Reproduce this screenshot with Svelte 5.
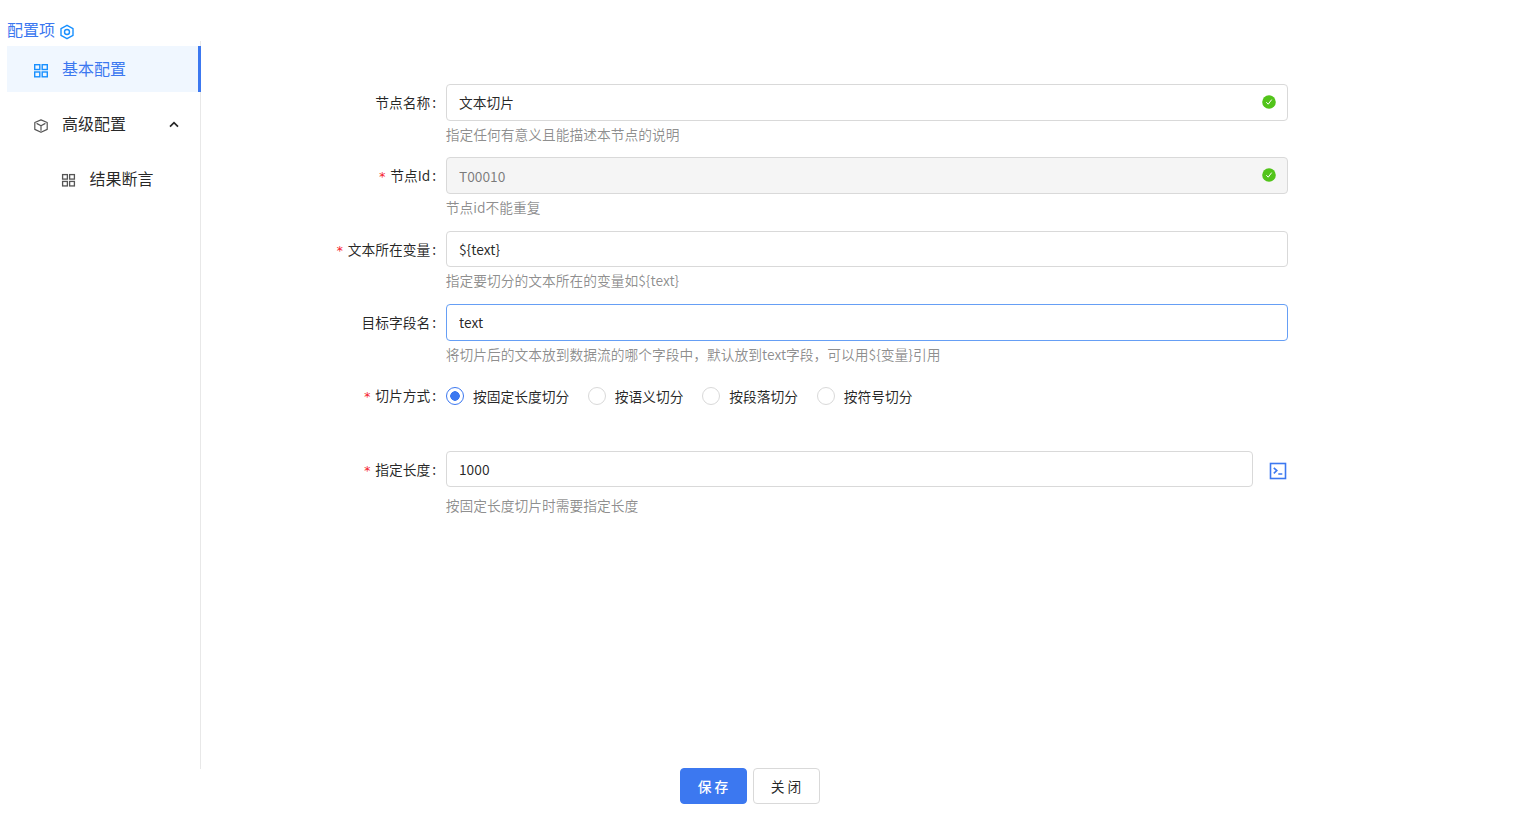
<script>
  let sliceType = $state("fixed");
  let openAdvanced = $state(true);

  const sliceTypes = [
    { value: "fixed", label: "按固定长度切分" },
    { value: "semantic", label: "按语义切分" },
    { value: "paragraph", label: "按段落切分" },
    { value: "symbol", label: "按符号切分" },
  ];

  let fields = $state([
    { id: "name", label: "节点名称", value: "文本切片", help: "指定任何有意义且能描述本节点的说明", valid: true },
    { id: "nodeId", label: "节点Id", value: "T00010", help: "节点id不能重复", required: true, disabled: true, valid: true },
    { id: "source", label: "文本所在变量", value: "${text}", help: "指定要切分的文本所在的变量如${text}", required: true },
    { id: "target", label: "目标字段名", value: "text", help: "将切片后的文本放到数据流的哪个字段中，默认放到text字段，可以用${变量}引用", active: true },
  ]);
  let sliceLength = $state("1000");
</script>

{#snippet gridIcon()}
  <svg class="icon" viewBox="0 0 16 16" fill="none" stroke="currentColor" stroke-width="1.4">
    <rect x="1.7" y="1.7" width="5.1" height="4.8" />
    <rect x="9.2" y="1.7" width="5.1" height="4.8" />
    <rect x="1.7" y="9" width="5.1" height="4.8" />
    <rect x="9.2" y="9" width="5.1" height="4.8" />
  </svg>
{/snippet}

<div class="page">
  <div class="title">
    <span>配置项</span>
    <svg viewBox="0 0 16 16" fill="none" stroke="currentColor" stroke-width="1.4" stroke-linejoin="round">
      <path d="M8 1.3l6 3.3v6.8l-6 3.3-6-3.3V4.6z" />
      <circle cx="8" cy="8" r="2.5" />
    </svg>
  </div>

  <div class="body">
    <ul class="menu">
      <li class="selected">{@render gridIcon()}<span>基本配置</span></li>
      <li onclick={() => (openAdvanced = !openAdvanced)}>
        <svg class="icon" viewBox="0 0 16 16" fill="none" stroke="currentColor" stroke-width="1.2" stroke-linejoin="round">
          <path d="M8 1.9l6.2 2.6v6.9L8 14.3l-6.2-2.9V4.5zM3.6 5.4L8 7.7l4.4-2.3M8 7.7v5" />
        </svg>
        <span>高级配置</span>
        <svg class="arrow" viewBox="0 0 10 7" fill="none" stroke="currentColor" stroke-width="1.7">
          <path d="M1 5.6l4-4 4 4" />
        </svg>
      </li>
      {#if openAdvanced}
        <li class="sub">{@render gridIcon()}<span>结果断言</span></li>
      {/if}
    </ul>

    <form class="form">
      {#each fields as field}
        <div class="form-item">
          <label for={field.id} class:required={field.required}>{field.label}</label>
          <div class="control">
            <div class="input-wrap">
              <input id={field.id} class:active={field.active} disabled={field.disabled} bind:value={field.value} />
              {#if field.valid}
                <svg class="check" viewBox="0 0 14 14">
                  <circle cx="7" cy="7" r="6.8" fill="#52c41a" />
                  <path d="M4.3 7.2l1.9 2 3.5-4.6" fill="none" stroke="#fff" stroke-width="1" />
                </svg>
              {/if}
            </div>
            <div class="help">{field.help}</div>
          </div>
        </div>
      {/each}

      <div class="form-item">
        <span class="label required">切片方式</span>
        <div class="control radios">
          {#each sliceTypes as type}
            <label class="radio">
              <input type="radio" name="sliceType" value={type.value} bind:group={sliceType} />
              <span>{type.label}</span>
            </label>
          {/each}
        </div>
      </div>

      <div class="form-item">
        <label for="length" class="required">指定长度</label>
        <div class="control">
          <div class="input-wrap">
            <input id="length" bind:value={sliceLength} />
            <svg class="code" viewBox="0 0 18 18" fill="none" stroke="currentColor" stroke-width="1.6">
              <rect x="1.5" y="1.5" width="15" height="15" />
              <path d="M4.8 5.8l3 2.8-3 2.8M9.3 12h4" />
            </svg>
          </div>
          <div class="help spaced">按固定长度切片时需要指定长度</div>
        </div>
      </div>
    </form>
  </div>

  <div class="footer">
    <button class="primary">保存</button>
    <button>关闭</button>
  </div>
</div>

<style>
  :global(body) {
    background: #fff;
  }
  .page {
    height: 828px;
    box-sizing: border-box;
    padding: 18px 0 24px 7px;
    display: flex;
    flex-direction: column;
    overflow: hidden;
    font-family: "Noto Sans CJK SC", sans-serif;
    font-size: 13.75px;
    color: rgba(0, 0, 0, 0.85);
  }
  .title {
    height: 23px;
    display: flex;
    align-items: center;
    gap: 4px;
    font-size: 16px;
    line-height: 23px;
    color: #3c78f0;
  }
  .title svg {
    width: 16px;
    height: 16px;
    margin-top: 4px;
    color: #1890ff;
  }

  .body {
    flex: 1;
    display: flex;
  }
  .menu {
    width: 194px;
    box-sizing: border-box;
    margin: 0;
    padding: 5px 0 0;
    list-style: none;
    border-right: 1px solid #e8e8e8;
    font-size: 16px;
  }
  .menu li {
    height: 46px;
    margin: 0 -1px 9px 0;
    padding: 0 22px 2px 26px;
    box-sizing: border-box;
    display: flex;
    align-items: center;
    cursor: pointer;
  }
  .menu li span {
    flex: 1;
  }
  .menu li.selected {
    color: #3c78f0;
    background: #f0f7ff;
    border-right: 3px solid #3c78f0;
  }
  .menu li.sub {
    padding-left: 54px;
  }
  .icon {
    width: 16px;
    height: 16px;
    margin: 5px 13px 0 0;
    color: #555;
  }
  .sub .icon {
    width: 15px;
    height: 15px;
    margin-right: 13.5px;
  }
  .selected .icon {
    color: #1890ff;
  }
  .arrow {
    width: 10px;
    height: 7px;
    margin-top: 2px;
  }

  .form {
    padding: 43px 0 0 104.7px;
  }
  .form-item {
    display: flex;
    height: 73.33px;
  }
  .form-item > label,
  .form-item > .label {
    width: 140px;
    padding-right: 9.6px;
    box-sizing: border-box;
    height: 36.67px;
    line-height: 36.67px;
    text-align: right;
    white-space: nowrap;
    flex: none;
  }
  .form-item > label::after,
  .form-item > .label::after {
    content: ":";
    margin-left: 2px;
  }
  .form-item > .required::before {
    content: "*";
    margin-right: 4.2px;
    color: #f5222d;
    font-family: "DejaVu Sans Mono", monospace;
    font-size: 12.6px;
  }
  .control {
    width: 842px;
  }
  .input-wrap {
    position: relative;
    display: flex;
    align-items: center;
  }
  .input-wrap input {
    flex: 1;
    height: 36.67px;
    box-sizing: border-box;
    padding: 0 12.3px;
    border: 1px solid #d9d9d9;
    border-radius: 4px;
    outline: none;
    background: #fff;
    font: inherit;
    color: inherit;
  }
  .input-wrap input.active {
    border-color: #669ff5;
  }
  .input-wrap input:disabled {
    background: #f5f5f5;
    color: rgba(0, 0, 0, 0.5);
  }
  .check {
    position: absolute;
    right: 11.5px;
    top: 11px;
    width: 14px;
    height: 14px;
  }
  .code {
    width: 18px;
    height: 18px;
    margin: 4px 0.7px 0 16.3px;
    color: #3c78f0;
  }
  .help {
    line-height: 20px;
    margin-top: 2.9px;
    color: rgba(0, 0, 0, 0.45);
  }
  .help.spaced {
    margin-top: 7.4px;
  }
  .radios {
    display: flex;
    height: 36.67px;
    align-items: center;
  }
  .radio {
    display: flex;
    align-items: center;
    margin-right: 18.5px;
  }
  .radio input {
    appearance: none;
    width: 18px;
    height: 18px;
    margin: 0 9.2px 0 0;
    box-sizing: border-box;
    border: 1px solid #d9d9d9;
    border-radius: 50%;
    background: #fff;
  }
  .radio input:checked {
    border-color: #3c78f0;
    background: radial-gradient(circle, #3c78f0 4.5px, #fff 5px);
  }

  .footer {
    display: flex;
    gap: 6px;
    margin-left: 673px;
    margin-top: -1px;
  }
  button {
    width: 67px;
    height: 36px;
    padding: 0 0 0 2px;
    border: 1px solid #d9d9d9;
    border-radius: 4px;
    background: #fff;
    font: inherit;
    letter-spacing: 3px;
    color: inherit;
  }
  button.primary {
    border-color: #3c78f0;
    background: #3c78f0;
    color: #fff;
    font-weight: 500;
  }
</style>
